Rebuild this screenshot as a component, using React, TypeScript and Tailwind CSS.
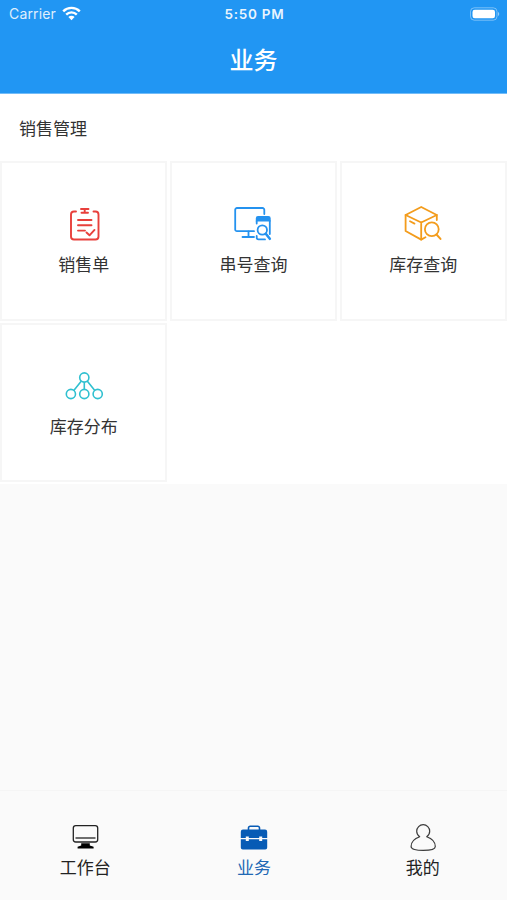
import React from 'react';

const SalesOrderIcon = () => (
  <svg width="40" height="40" viewBox="0 0 40 40" fill="none" stroke="#e8403c" strokeWidth="1.9" strokeLinecap="round" strokeLinejoin="round">
    <path d="M12 7.5H10a3 3 0 0 0-3 3v22a3 3 0 0 0 3 3h21.500a3 3 0 0 0 3-3v-22a3 3 0 0 0-3-3h-2" />
    <path d="M17 5h7.500M17.500 8.800h6.500M20.700 5v3.500" />
    <path d="M14 16h13.500M14 21.300h13.500M14 26.600h7M22.500 28.500l3 2.800 5-5.400" />
  </svg>
);

const SerialSearchIcon = () => (
  <svg width="40" height="40" viewBox="0 0 40 40" fill="none" stroke="#2492ef" strokeWidth="1.8" strokeLinecap="round" strokeLinejoin="round">
    <path d="M21 27.2H4a1.8 1.8 0 0 1-1.8-1.8V5.8A1.8 1.8 0 0 1 4 4h25.5a1.8 1.8 0 0 1 1.8 1.8V10" />
    <path d="M15.5 27.5V33M9.5 33H21" />
    <path d="M22.8 17.5v-3.2A2.3 2.3 0 0 1 25 12h10.4a2.3 2.3 0 0 1 2.3 2.3v3.2z" fill="#2492ef" stroke="none" />
    <path d="M23.7 17v2.5M23.7 32v1.6c0 1.1.7 1.8 1.8 1.8H32M36.8 17v13" />
    <circle cx="29.3" cy="26" r="4.7" />
    <path d="M32.8 29.8l4 5" strokeWidth="2.6" />
  </svg>
);

const StockSearchIcon = () => (
  <svg width="40" height="40" viewBox="0 0 40 40" fill="none" stroke="#f39c1c" strokeWidth="1.8" strokeLinecap="round" strokeLinejoin="round">
    <path d="M33.8 16v-5L18.2 3 2.6 11v16l15.6 8.6 4.3-2.3" />
    <path d="M2.6 11l15.6 7.5L33.8 11M18.2 18.5v17M7 17.3l4.5 2.3" />
    <circle cx="28.8" cy="25.3" r="6.9" />
    <path d="M33.5 30.5l4 4.4" strokeWidth="2" />
  </svg>
);

const StockSpreadIcon = () => (
  <svg width="40" height="40" viewBox="0 0 40 40" fill="none" stroke="#30c0d0" strokeWidth="1.6">
    <circle cx="20.300" cy="11.500" r="4.600" />
    <circle cx="6.900" cy="28" r="4.600" />
    <circle cx="20.300" cy="28" r="4.600" />
    <circle cx="33.700" cy="28" r="4.600" />
    <path d="M17.400 15.100L9.800 24.400M20.300 16.100v7.300M23.200 15.100l7.600 9.300" />
  </svg>
);

const WorkbenchIcon = () => (
  <svg width="32" height="32" viewBox="0 0 32 32" fill="none" stroke="#222" strokeWidth="1.3">
    <rect x="4.3" y="4.6" width="24.4" height="16.4" rx="2.5" />
    <path d="M6.5 17h20" />
    <path d="M12.2 22.3h8.600v2.200l3.800 1.200v1.800H8.600v-1.800l3.600-1.200z" fill="#000" stroke="none" />
  </svg>
);

const BusinessIcon = () => (
  <svg width="32" height="32" viewBox="0 0 32 32" fill="#075bb5">
    <path d="M10.5 9V7a1.7 1.7 0 0 1 1.700-1.700h7.600A1.700 1.700 0 0 1 21.500 7v2" fill="none" stroke="#075bb5" strokeWidth="1.6" />
    <path d="M5 8.500h22a2.200 2.200 0 0 1 2.200 2.200v6.300h-5v-1.600h-3v1.600H10.800v-1.600h-3v1.600h-5v-6.300A2.200 2.200 0 0 1 5 8.500z" />
    <path d="M2.800 18.200h5v1.700h3v-1.700h10.400v1.700h3v-1.700h5v8.200a2 2 0 0 1-2 2H4.800a2 2 0 0 1-2-2z" />
  </svg>
);

const ProfileIcon = () => (
  <svg width="32" height="32" viewBox="0 0 32 32" fill="none" stroke="#3c3c3c" strokeWidth="1.2" strokeLinejoin="round">
    <path d="M12.700 15.700c-2-1.400-3-3.200-3-5.500a6.500 6.500 0 0 1 13 0c0 2.300-1 4.100-3 5.500 4.900 1.700 8.600 5.200 8.600 9.800 0 2.800-5.100 3.900-12.100 3.900S4.100 28.300 4.100 25.500c0-4.600 3.700-8.100 8.600-9.800z" />
  </svg>
);

const menus = [
  { name: '销售单', icon: <SalesOrderIcon /> },
  { name: '串号查询', icon: <SerialSearchIcon /> },
  { name: '库存查询', icon: <StockSearchIcon /> },
  { name: '库存分布', icon: <StockSpreadIcon /> },
];

const tabs = [
  { name: '工作台', icon: <WorkbenchIcon />, active: false },
  { name: '业务', icon: <BusinessIcon />, active: true },
  { name: '我的', icon: <ProfileIcon />, active: false },
];

const StatusBar = () => (
  <div className="h-[27px] grid grid-cols-3 items-center pl-[9px] pr-[7px] font-['Inter',sans-serif] text-white">
    <div className="flex items-center gap-[6px]">
      <span className="text-[14px] tracking-[0.15px] opacity-85">Carrier</span>
      <svg width="19" height="15" viewBox="0 0 19 15" fill="none" stroke="#fff" strokeWidth="2.4">
        <path d="M1.2 5.3a11.8 11.8 0 0 1 16.6 0M4.2 8.6a7.5 7.5 0 0 1 10.6 0" />
        <path d="M6.4 11a4.4 4.4 0 0 1 6.2 0l-3.1 3.2z" fill="#fff" stroke="none" />
      </svg>
    </div>
    <span className="pt-px text-center text-[13.5px] font-semibold tracking-[0.75px] opacity-90">5:50 PM</span>
    <div className="flex justify-end">
      <svg width="31" height="14" viewBox="0 0 31 14">
        <rect x="1.5" y="0.8" width="26.5" height="12.4" rx="3.8" fill="none" stroke="#fff" strokeOpacity="0.4" />
        <rect x="3.5" y="2.7" width="22.5" height="8.6" rx="2.3" fill="#fff" />
        <path d="M29 5c1.7.6 1.7 3.4 0 4z" fill="#fff" fillOpacity="0.5" />
      </svg>
    </div>
  </div>
);

export default function App() {
  return (
    <div className="w-full h-[900px] flex flex-col bg-[#fafafa] font-['Noto_Sans_CJK_SC',sans-serif] text-[#333]">
      {/* Header */}
      <header className="h-[94px] shrink-0 bg-[#2196f3] border-b border-[#72bcf8]">
        <StatusBar />
        <h1 className="h-16 flex items-center justify-center text-[24px] font-medium text-white">业务</h1>
      </header>

      {/* Menu grid */}
      <section className="bg-white">
        <h2 className="h-[67px] flex items-center pl-[19px] text-[17px]">销售管理</h2>
        <div className="grid grid-cols-3 gap-x-[2.5px] gap-y-[2px] pb-[2px]">
          {menus.map(menu => (
            <div key={menu.name} className="h-[159.5px] pt-[41px] flex flex-col items-center border-2 border-[#f6f6f6]">
              {menu.icon}
              <span className="mt-[8px] text-[17px] leading-6">{menu.name}</span>
            </div>
          ))}
        </div>
      </section>

      {/* Bottom tabs */}
      <nav className="mt-auto h-[110px] grid grid-cols-3 pl-px border-t border-[#f5f5f5] pt-[30px]">
        {tabs.map(tab => (
          <div key={tab.name} className={`flex flex-col items-center ${tab.active ? 'text-[#2168b4]' : 'text-[#222]'}`}>
            {tab.icon}
            <span className="mt-[2px] text-[17px] leading-6">{tab.name}</span>
          </div>
        ))}
      </nav>
    </div>
  );
}
